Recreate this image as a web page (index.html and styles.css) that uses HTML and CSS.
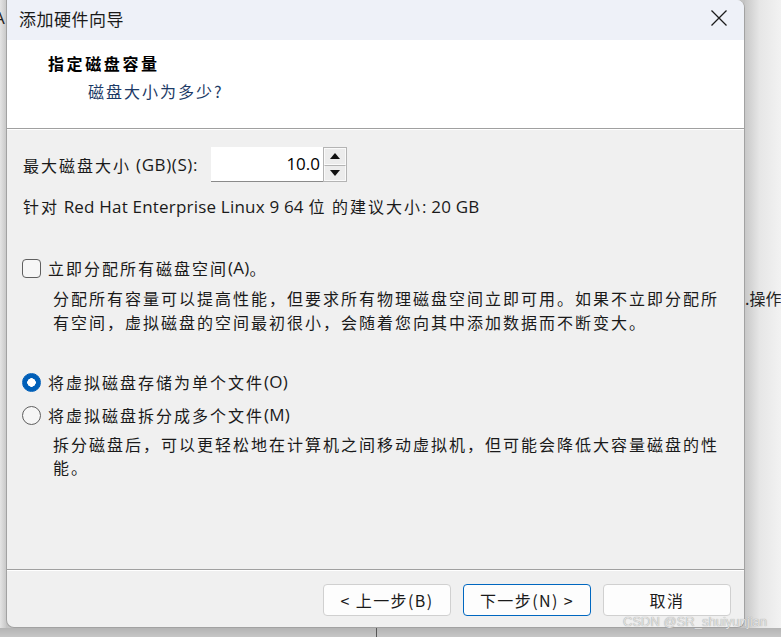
FILE: index.html
```html
<!DOCTYPE html>
<html lang="zh-CN">
<head>
<meta charset="utf-8">
<title>添加硬件向导</title>
<link rel="stylesheet" href="styles.css">
</head>
<body>
<div class="screen">
  <div class="left-strip"><span class="edge-a">A</span></div>
  <div class="dialog">
    <div class="titlebar">
      <span class="title">添加硬件向导</span>
      <svg class="close" width="16" height="16" viewBox="0 0 16 16"><path d="M0.5 0.5 L15.5 15.5 M15.5 0.5 L0.5 15.5" stroke="#1b1b1b" stroke-width="1.3" fill="none"/></svg>
    </div>
    <div class="header">
      <div class="h-title">指定磁盘容量</div>
      <div class="h-sub">磁盘大小为多少?</div>
    </div>
    <div class="body">
      <div class="size-row">
        <span class="cjk">最大磁盘大小</span><span class="lat">&nbsp;(GB)(S):</span>
        <div class="spinner">
          <div class="spin-input">10.0</div>
          <div class="spin-btns">
            <div class="spin-btn"><svg width="10" height="6" viewBox="0 0 10 6"><path d="M0 6 L5 0 L10 6 Z" fill="#111"/></svg></div>
            <div class="spin-btn"><svg width="10" height="6" viewBox="0 0 10 6"><path d="M0 0 L10 0 L5 6 Z" fill="#111"/></svg></div>
          </div>
        </div>
      </div>
      <div class="recommend"><span class="cjk">针对</span><span class="lat"> Red Hat Enterprise Linux 9 64 </span><span class="cjk">位 的建议大小</span><span class="lat">: 20 GB</span></div>
      <div class="option check-row">
        <span class="checkbox"></span>
        <span class="cjk">立即分配所有磁盘空间</span><span class="lat">(A)</span><span class="cjk">。</span>
      </div>
      <p class="desc">分配所有容量可以提高性能，但要求所有物理磁盘空间立即可用。如果不立即分配所<br>有空间，虚拟磁盘的空间最初很小，会随着您向其中添加数据而不断变大。</p>
      <div class="option radio-row first">
        <span class="radio on"></span>
        <span class="cjk">将虚拟磁盘存储为单个文件</span><span class="lat">(O)</span>
      </div>
      <div class="option radio-row second">
        <span class="radio"></span>
        <span class="cjk">将虚拟磁盘拆分成多个文件</span><span class="lat">(M)</span>
      </div>
      <p class="desc desc2">拆分磁盘后，可以更轻松地在计算机之间移动虚拟机，但可能会降低大容量磁盘的性<br>能。</p>
    </div>
    <div class="footer">
      <button class="btn">&lt; 上一步(B)</button>
      <button class="btn primary">下一步(N) &gt;</button>
      <button class="btn">取消</button>
    </div>
  </div>
  <div class="right-strip"><span class="op">.操作</span></div>
</div>
<div class="bottom-strip"><div class="bottom-line"></div></div>
<div class="watermark">CSDN @SR_shuiyunjian</div>
</body>
</html>
```
FILE: styles.css
```css
html, body {
  margin: 0;
  padding: 0;
}
body {
  width: 781px;
  height: 637px;
  overflow: hidden;
  position: relative;
  background: #c4c4c4;
  font-family: "Noto Sans CJK SC", "Noto Sans", sans-serif;
  color: #111;
}
.screen {
  display: flex;
  height: 628px;
}
.left-strip {
  width: 6px;
  background: linear-gradient(to right, #e4e4e4, #c9c9c9);
  position: relative;
  overflow: hidden;
}
.edge-a {
  position: absolute;
  left: -6px;
  top: 7px;
  font-family: "Open Sans", sans-serif;
  font-size: 17px;
  color: #222;
  line-height: 22px;
}
.dialog {
  width: 737px;
  height: 627px;
  border: 1px solid #a2a2a2;
  border-top: none;
  border-radius: 0 8px 8px 8px;
  background: #f0f0f0;
  display: flex;
  flex-direction: column;
  overflow: hidden;
}
.titlebar {
  height: 40px;
  background: #eef1f8;
  display: flex;
  align-items: center;
  justify-content: space-between;
  padding: 0 17px 0 12px;
  flex-shrink: 0;
}
.title {
  font-size: 17px;
  letter-spacing: 0.5px;
  color: #1a1a1a;
  line-height: 22px;
  margin-top: -3px;
}
.close {
  margin-top: -4px;
}
.header {
  height: 89px;
  background: #fff;
  border-bottom: 1px solid #a0a0a0;
  box-shadow: 0 1px 0 #fff;
  padding-top: 11px;
  box-sizing: border-box;
  flex-shrink: 0;
}
.h-title {
  margin-left: 41px;
  font-size: 16px;
  font-weight: 700;
  letter-spacing: 2.6px;
  line-height: 24px;
  color: #000;
}
.h-sub {
  margin-left: 81px;
  margin-top: 4px;
  font-size: 16px;
  letter-spacing: 2px;
  line-height: 24px;
  color: #1c3a66;
}
.body {
  flex: 1;
  padding: 0 0 0 16px;
  margin-top: 2px;
  font-size: 16px;
  border-bottom: 1px solid #a0a0a0;
}
.cjk {
  letter-spacing: 2px;
}
.lat {
  font-family: "Open Sans", sans-serif;
  font-size: 17px;
  letter-spacing: 0.2px;
}
.size-row {
  display: flex;
  align-items: center;
  height: 35px;
  margin-top: 16px;
  white-space: pre;
  color: #1a1a1a;
}
.size-row .lat {
  letter-spacing: 0.6px;
}
.spinner {
  display: flex;
  margin-left: 13px;
  height: 35px;
}
.spin-input {
  width: 109px;
  height: 34px;
  background: #fff;
  border-bottom: 1px solid #8a8a8a;
  text-align: right;
  padding-right: 3px;
  font-family: "Open Sans", sans-serif;
  font-size: 17px;
  line-height: 34px;
  color: #000;
}
.spin-btns {
  display: flex;
  flex-direction: column;
  width: 24px;
  height: 35px;
  border: 1px solid #b4b4b4;
  box-sizing: border-box;
}
.spin-btn {
  flex: 1;
  display: flex;
  align-items: center;
  justify-content: center;
  background: #ececec;
  border: 1px solid #fafafa;
}
.spin-btn + .spin-btn {
  border-top: 1px solid #b4b4b4;
}
.recommend {
  margin-top: 12px;
  line-height: 24px;
  white-space: pre;
  color: #1a1a1a;
}
.option {
  display: flex;
  align-items: center;
  line-height: 24px;
  height: 24px;
  white-space: pre;
  color: #1a1a1a;
}
.check-row {
  margin-top: 37px;
}
.checkbox {
  width: 17px;
  height: 17px;
  border: 1px solid #5f5f5f;
  border-radius: 4px;
  background: #f6f6f6;
  margin: 0 7px 0 -1px;
  flex-shrink: 0;
}
.radio {
  width: 17px;
  height: 17px;
  border: 1px solid #5f5f5f;
  border-radius: 50%;
  background: #f6f6f6;
  margin: 0 7px 0 -1px;
  box-sizing: content-box;
  flex-shrink: 0;
}
.radio.on {
  border-color: #005fb8;
  background: radial-gradient(circle, #fff 0 4px, #005fb8 4.5px);
}
.desc {
  margin: 6px 0 0 30px;
  line-height: 24px;
  letter-spacing: 2px;
  color: #1a1a1a;
  white-space: nowrap;
}
.radio-row.first {
  margin-top: 36px;
}
.radio-row.second {
  margin-top: 9px;
}
.desc2 {
  line-height: 23px;
}
.footer {
  height: 57px;
  flex-shrink: 0;
  display: flex;
  align-items: flex-start;
  padding: 13px 0 0 316px;
  gap: 12px;
  border-top: 1px solid #fff;
  box-sizing: border-box;
}
.btn {
  width: 128px;
  height: 32px;
  border: 1px solid #d0d0d0;
  border-radius: 4px;
  background: #fdfdfd;
  font-family: "Noto Sans CJK SC", sans-serif;
  font-size: 16px;
  letter-spacing: 1.4px;
  color: #1a1a1a;
  padding: 0;
}
.btn.primary {
  border-color: #0067c0;
}
.right-strip {
  flex: 1;
  background: linear-gradient(to right, #c8c8c8, #e6e6e6 40%, #f2f2f2);
  position: relative;
  overflow: hidden;
}
.op {
  position: absolute;
  left: 0;
  top: 286px;
  font-size: 16px;
  line-height: 24px;
  color: #222;
  white-space: nowrap;
}
.bottom-strip {
  height: 9px;
  background: linear-gradient(to bottom, #b4b4b4, #c6c6c6);
  position: relative;
}
.bottom-line {
  position: absolute;
  left: 376px;
  top: 0;
  width: 1px;
  height: 9px;
  background: #555;
}
.watermark {
  position: absolute;
  left: 623px;
  top: 613px;
  font-family: "Liberation Sans", sans-serif;
  font-size: 13px;
  line-height: 18px;
  color: #e2e2e2;
  text-shadow: 0 0 1px #8a8a8a;
  letter-spacing: 0;
}
```
